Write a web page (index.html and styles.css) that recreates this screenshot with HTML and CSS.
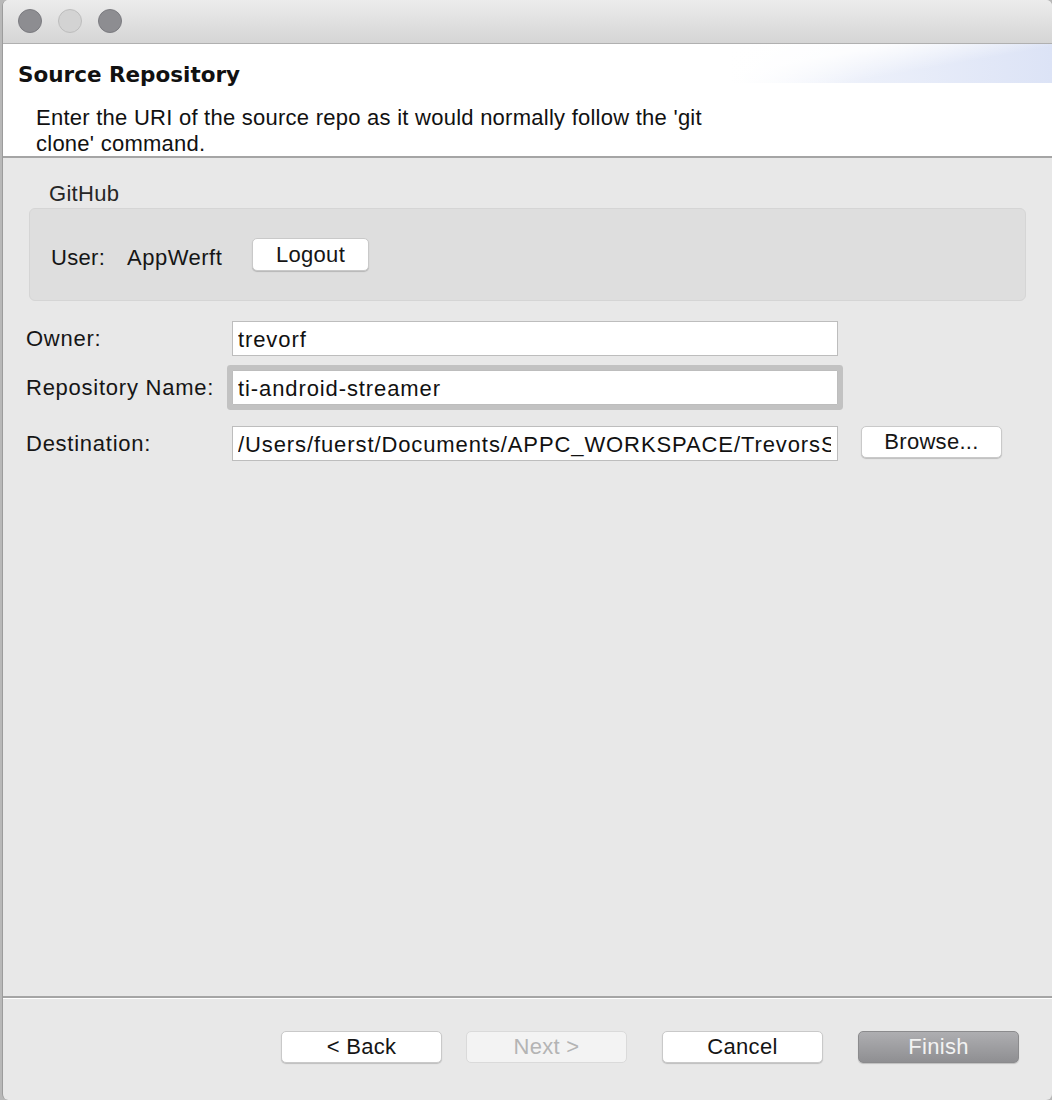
FILE: index.html
```html
<!DOCTYPE html>
<html>
<head>
<meta charset="utf-8">
<link rel="stylesheet" href="styles.css">
<title>Source Repository</title>
</head>
<body>
<div class="window">
  <div class="titlebar">
    <span class="light light-dark"></span>
    <span class="light light-pale"></span>
    <span class="light light-dark"></span>
  </div>
  <div class="header">
    <div class="banner"></div>
    <h1 class="title">Source Repository</h1>
    <p class="desc">Enter the URI of the source repo as it would normally follow the 'git clone' command.</p>
  </div>
  <div class="content">
    <div class="group-label">GitHub</div>
    <div class="group">
      <span class="user-label">User:</span>
      <span class="user-name">AppWerft</span>
      <button class="btn btn-logout">Logout</button>
    </div>
    <div class="row row-owner">
      <label class="field-label">Owner:</label>
      <input class="field" type="text" value="trevorf">
    </div>
    <div class="row row-repo">
      <label class="field-label">Repository Name:</label>
      <input class="field field-focus" type="text" value="ti-android-streamer">
    </div>
    <div class="row row-dest">
      <label class="field-label">Destination:</label>
      <input class="field" type="text" value="/Users/fuerst/Documents/APPC_WORKSPACE/TrevorsStreamer">
      <button class="btn btn-browse">Browse...</button>
    </div>
  </div>
  <div class="footer">
    <button class="btn btn-nav">&lt; Back</button>
    <button class="btn btn-nav btn-disabled">Next &gt;</button>
    <button class="btn btn-nav btn-cancel">Cancel</button>
    <button class="btn btn-nav btn-default">Finish</button>
  </div>
</div>
</body>
</html>
```
FILE: styles.css
```css
* { box-sizing: border-box; }
html, body {
  margin: 0;
  padding: 0;
  width: 1052px;
  height: 1100px;
  overflow: hidden;
  background: #b8b8b8;
}
body {
  font-family: "Liberation Sans", Arial, sans-serif;
  font-size: 22px;
  letter-spacing: 0.75px;
  color: #161616;
}
.window {
  margin-left: 2px;
  width: 1050px;
  height: 1100px;
  border-radius: 6px;
  overflow: hidden;
  background: #e8e8e8;
  display: flex;
  flex-direction: column;
  border-left: 1px solid #9c9c9c;
}
.titlebar {
  height: 44px;
  flex: 0 0 44px;
  background: linear-gradient(#ececec, #d5d5d5);
  border-bottom: 1px solid #b0b0b0;
  display: flex;
  align-items: center;
  gap: 16px;
  padding-left: 15px;
  padding-bottom: 1px;
}
.light {
  width: 24px;
  height: 24px;
  border-radius: 50%;
  display: block;
}
.light-dark {
  background: #8d8d91;
  border: 1px solid #7b7b80;
}
.light-pale {
  background: #d3d3d3;
  border: 1px solid #bdbdbd;
}
.header {
  position: relative;
  height: 114px;
  flex: 0 0 114px;
  background: #fff;
  border-bottom: 2px solid #a5a5a5;
  padding: 18px 0 0 15px;
}
.banner {
  position: absolute;
  top: 0;
  right: 0;
  width: 320px;
  height: 39px;
  background:
    linear-gradient(170deg, #fff 0%, rgba(255,255,255,0.85) 30%, rgba(255,255,255,0) 62%),
    linear-gradient(to right, rgba(221,228,246,0) 0%, rgba(221,228,246,0.55) 40%, #dce3f6 100%);
}
.title {
  position: relative;
  margin: 0;
  font-family: "DejaVu Sans", Verdana, sans-serif;
  font-weight: bold;
  font-size: 21.5px;
  letter-spacing: 0;
  line-height: 26px;
  color: #111;
}
.desc {
  position: relative;
  margin: 17px 0 0 18px;
  width: 700px;
  line-height: 26px;
  letter-spacing: 0.25px;
  color: #111;
}
.content {
  flex: 1;
  padding: 23px 26px 0 23px;
}
.group-label {
  line-height: 26px;
  margin-left: 23px;
  color: #262626;
  letter-spacing: 0.3px;
}
.group {
  margin: 1px 0 0 3px;
  height: 93px;
  background: #dedede;
  border: 1px solid #d5d5d5;
  border-radius: 6px;
  display: flex;
  align-items: center;
  padding: 0 0 0 21px;
}
.user-label { width: 76px; padding-top: 7px; letter-spacing: 0.3px; }
.user-name { width: 125px; padding-top: 7px; letter-spacing: 0.5px; }
.btn {
  font-family: "Liberation Sans", Arial, sans-serif;
  font-size: 22px;
  letter-spacing: 0.3px;
  color: #151515;
  background: #fff;
  border: 1px solid #c9c9c9;
  border-radius: 5px;
  box-shadow: 0 1px 1px rgba(0,0,0,0.18);
  padding: 0;
  height: 32px;
  line-height: 30px;
}
.btn-logout {
  width: 117px;
  height: 33px;
}
.row {
  display: flex;
  align-items: center;
}
.row-owner { margin-top: 20px; }
.row-repo { margin-top: 14px; }
.row-dest { margin-top: 21px; }
.field-label {
  width: 206px;
  flex: 0 0 206px;
}
.field {
  width: 606px;
  height: 35px;
  border: 1px solid #bdbdbd;
  background: #fff;
  font-family: "Liberation Sans", Arial, sans-serif;
  font-size: 22px;
  letter-spacing: 0.9px;
  color: #111;
  padding: 2px 6px 0 5px;
  margin: 0;
  outline: none;
  border-radius: 0;
}
.field-focus {
  border-radius: 1px;
  box-shadow: 0 0 0 5px #c2c2c2;
}
.btn-browse {
  width: 141px;
  margin-left: 23px;
  margin-top: -3px;
}
.footer {
  height: 104px;
  flex: 0 0 104px;
  border-top: 2px solid #a5a5a5;
  box-shadow: inset 0 1px 0 #fff;
  display: flex;
  justify-content: flex-end;
  align-items: flex-start;
  padding: 33px 33px 0 0;
}
.btn-nav {
  width: 161px;
  margin-left: 35px;
}
.btn-disabled {
  margin-left: 24px;
  background: #f3f3f3;
  border-color: #dadada;
  box-shadow: none;
  color: #b4b4b4;
}
.btn-default {
  background: linear-gradient(#aeaeb1, #8f8f92);
  border-color: #8b8b8d;
  color: #f3f3f3;
}
```
